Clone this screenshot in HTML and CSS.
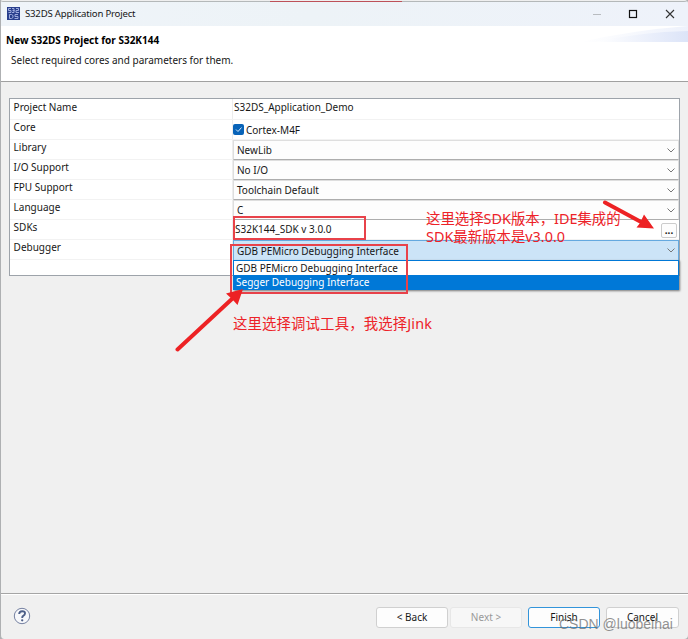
FILE: index.html
```html
<!DOCTYPE html>
<html lang="en">
<head>
<meta charset="utf-8">
<title>S32DS Application Project</title>
<link rel="stylesheet" href="styles.css">
</head>
<body>
<div class="window">
  <header class="titlebar">
    <svg class="app-icon" width="13" height="13" viewBox="0 0 13 13"><rect width="13" height="13" fill="#293f8d"/><path d="M4 1.500H1.500v2H4v2H1.500M5 1.500h2v4H5M5.500 3.500h2M9 1.500h2.500v2H9v2h3M2.500 7.500v4h2l1.500-1v-2l-1.500-1zM11 7.500H8v2h3v2H7.500" fill="none" stroke="#a9b7e5" stroke-width=".9"/></svg>
    <span class="caption">S32DS Application Project</span>
    <svg class="controls" width="90" height="12" viewBox="0 0 90 12"><path d="M3 6.500h8" stroke="#b8bcc0"/><rect x="39.500" y="2.500" width="7" height="7" fill="none" stroke="#111" stroke-width="1.2"/><path d="M76 2l8 8M84 2l-8 8" stroke="#333" stroke-width="1.1"/></svg>
  </header>
  <section class="banner">
    <svg class="swoosh" width="108" height="16" viewBox="0 0 108 16"><defs><linearGradient id="sky"><stop offset="0" stop-color="#fff"/><stop offset="1" stop-color="#dce4f8"/></linearGradient></defs><path d="M0 16Q55 4 108 0V16Z" fill="url(#sky)" opacity=".5"/><path d="M15 16Q60 6 108 5V16Z" fill="url(#sky)"/></svg>
    <h1>New S32DS Project for S32K144</h1>
    <p>Select required cores and parameters for them.</p>
  </section>
  <main class="content">
    <div class="grid">
      <div class="row first"><span class="label">Project Name</span><span class="value plain name">S32DS_Application_Demo</span></div>
      <div class="row"><span class="label">Core</span><span class="value check"><svg width="11" height="11" viewBox="0 0 11 11"><rect width="11" height="11" rx="2" fill="#0863b8"/><path d="M3 5.500l2 2 3.500-4" fill="none" stroke="#d5e9fa" stroke-width="1"/></svg><span>Cortex-M4F</span></span></div>
      <div class="row"><span class="label">Library</span><span class="value combo"><span>NewLib</span><svg class="chevron" width="8" height="5"><path d="M.5.5L4 4 7.500.5"/></svg></span></div>
      <div class="row"><span class="label">I/O Support</span><span class="value combo"><span>No I/O</span><svg class="chevron" width="8" height="5"><path d="M.5.5L4 4 7.500.5"/></svg></span></div>
      <div class="row"><span class="label">FPU Support</span><span class="value combo"><span>Toolchain Default</span><svg class="chevron" width="8" height="5"><path d="M.5.5L4 4 7.500.5"/></svg></span></div>
      <div class="row"><span class="label">Language</span><span class="value combo"><span>C</span><svg class="chevron" width="8" height="5"><path d="M.5.5L4 4 7.500.5"/></svg></span></div>
      <div class="row"><span class="label">SDKs</span><span class="value sdk"><span class="version">S32K144_SDK v 3.0.0</span><span class="more">...</span></span></div>
      <div class="row"><span class="label">Debugger</span><span class="value combo open"><span>GDB PEMicro Debugging Interface</span><svg class="chevron" width="8" height="5"><path d="M.5.5L4 4 7.500.5"/></svg></span></div>
      <div class="menu"><div class="option">GDB PEMicro Debugging Interface</div><div class="option selected">Segger Debugging Interface</div></div>
    </div>
  </main>
  <footer class="footer">
    <svg class="help" width="18" height="18" viewBox="0 0 18 18"><circle cx="9" cy="9" r="7.700" fill="#f7f8fb" stroke="#7580a0"/><path d="M6.200 7Q6.200 4.200 9.200 4.200T12 6.600Q12 8 10.200 8.900 9.200 9.400 9.200 11" fill="none" stroke="#4d5f88" stroke-width="1.900"/><circle cx="9.200" cy="13.300" r="1.150" fill="#4d5f88"/></svg>
    <span class="button back">&lt; Back</span><span class="button next">Next &gt;</span><span class="button finish">Finish</span><span class="button cancel">Cancel</span>
  </footer>
  <div class="frame frame-sdk"></div>
  <div class="frame frame-debug"></div>
  <div class="note note-sdk"><div>这里选择SDK版本，IDE集成的</div><div>SDK最新版本是v3.0.0</div></div>
  <div class="note note-debug">这里选择调试工具，我选择Jink</div>
  <svg class="arrows" width="688" height="639" viewBox="0 0 688 639"><g fill="#ed2224"><path d="M605 202.500L642 222.500M177.500 349.500L233 298" stroke="#ed2224" stroke-width="4" stroke-linecap="round"/><path d="M654 228.500L636.500 227.500 640 223 644 214.500ZM243 289L237.500 305 232.500 299.500 226 293.500Z"/></g></svg>
  <div class="watermark">CSDN @luobeihai</div>
</div>
</body>
</html>
```

FILE: styles.css
```css
* { box-sizing: border-box; }
body { margin: 0; background: #aeb0b2; color: #171717; font: 10px/14px "Noto Sans", "Noto Sans CJK SC", sans-serif; overflow: hidden; }
.window { position: relative; width: 688px; height: 639px; display: flex; flex-direction: column; background: #f0f0f0; border-left: 1px solid #aeb0b2; border-top: 1px solid #efefef; border-radius: 3px 4px 4px 4px; white-space: nowrap; overflow: hidden; }
.window::before { content: ""; position: absolute; top: 0; left: 0; width: 100%; height: 1px; background: linear-gradient(90deg, #b4b8b9 269px, #bd5159 269px 401px, #b4b8b9 401px); }
.titlebar { height: 25px; padding: 0 8px 0 6px; display: flex; align-items: center; background: linear-gradient(90deg, #eff4f9, #edf3f7 45%, #eef2fa); }
.app-icon { flex: none; }
.caption { margin-left: 5px; font-size: 9.6px; letter-spacing: -.2px; }
.controls { margin-left: auto; }
.banner { position: relative; height: 56px; padding: 7px 0 0 5px; background: #fff; border-bottom: 1px solid #a0a0a0; }
.banner h1 { margin: 0; font-size: 10px; line-height: 14px; font-weight: 700; color: #000; }
.banner p { margin: 6px 0 0 5px; line-height: 14px; }
.swoosh { position: absolute; right: 0; top: 0; }
.content { flex: 1; padding: 16px 8px 0 8px; }
.grid { position: relative; height: 178px; background: #fff; border: 1px solid #9da3aa; }
.row { height: 20px; display: flex; border-bottom: 1px solid #f2f2f2; }
.row.first { height: 21px; }
.label { width: 223px; padding: 0 0 0 3.6px; border-right: 1px solid #ededed; }
.row.first .label { padding-top: 1px; }
.value { flex: 1; height: 20px; display: flex; align-items: center; }
.plain { padding: 0 0 4px 1px; }
.check { gap: 2px; padding: 0 0 1px 0; }
.combo { padding: 0 3px 0 3px; background: #fdfdfd; border: 1px solid #dedede; border-bottom-color: #adadad; }
.chevron { margin-left: auto; fill: none; stroke: #777; }
.sdk { padding: 0 2px 3px 2px; align-items: flex-start; }
.version { padding-top: 2px; }
.more { width: 16px; height: 15px; margin: 3px 0 0 auto; background: #fdfdfd; border: 1px solid #ccc; border-radius: 2px; text-align: center; line-height: 12px; font-weight: 700; }
.combo.open { height: 21px; background: #cce4f7; border: 1px solid #65a9df; border-bottom: 1px solid #0078d4; }
.menu { position: absolute; top: 161px; left: 223px; width: 446px; height: 30px; background: #fff; border: 1px solid #0078d7; box-shadow: 1px 1px 2px #777; z-index: 1; }
.option { height: 14px; padding-left: 2px; line-height: 14px; }
.selected { background: #0078d7; color: #fff; }
.footer { height: 46px; display: flex; align-items: flex-start; padding: 13px 9px 0 12px; border-top: 1px solid #a5a5a5; box-shadow: inset 0 1px #fff; }
.button { width: 72px; height: 21px; border: 1px solid #d0d0d0; border-radius: 3px; background: #fdfdfd; text-align: center; line-height: 19px; }
.back { margin-left: auto; }
.next { margin-left: 2px; border-color: #e7e7e7; background: #f7f7f7; color: #999; }
.finish { margin-left: 6px; border-color: #3294da; }
.cancel { margin-left: 6px; width: 73px; }
.frame { position: absolute; border: 2px solid #e8424a; z-index: 2; }
.frame-sdk { left: 232px; top: 215px; width: 133px; height: 24px; }
.frame-debug { left: 229px; top: 243px; width: 178px; height: 50px; }
.note { position: absolute; z-index: 3; color: #ed2228; font: 14.4px/18px "Noto Sans", "Noto Sans CJK SC", sans-serif; }
.note-sdk { left: 425px; top: 209px; }
.note-debug { left: 232px; top: 314px; letter-spacing: .13px; }
.arrows { position: absolute; left: -1px; top: -1px; z-index: 3; }
.watermark { position: absolute; left: 558px; top: 614px; font: 14px/18px "Liberation Sans", sans-serif; color: rgba(110, 110, 110, .75); }
```
